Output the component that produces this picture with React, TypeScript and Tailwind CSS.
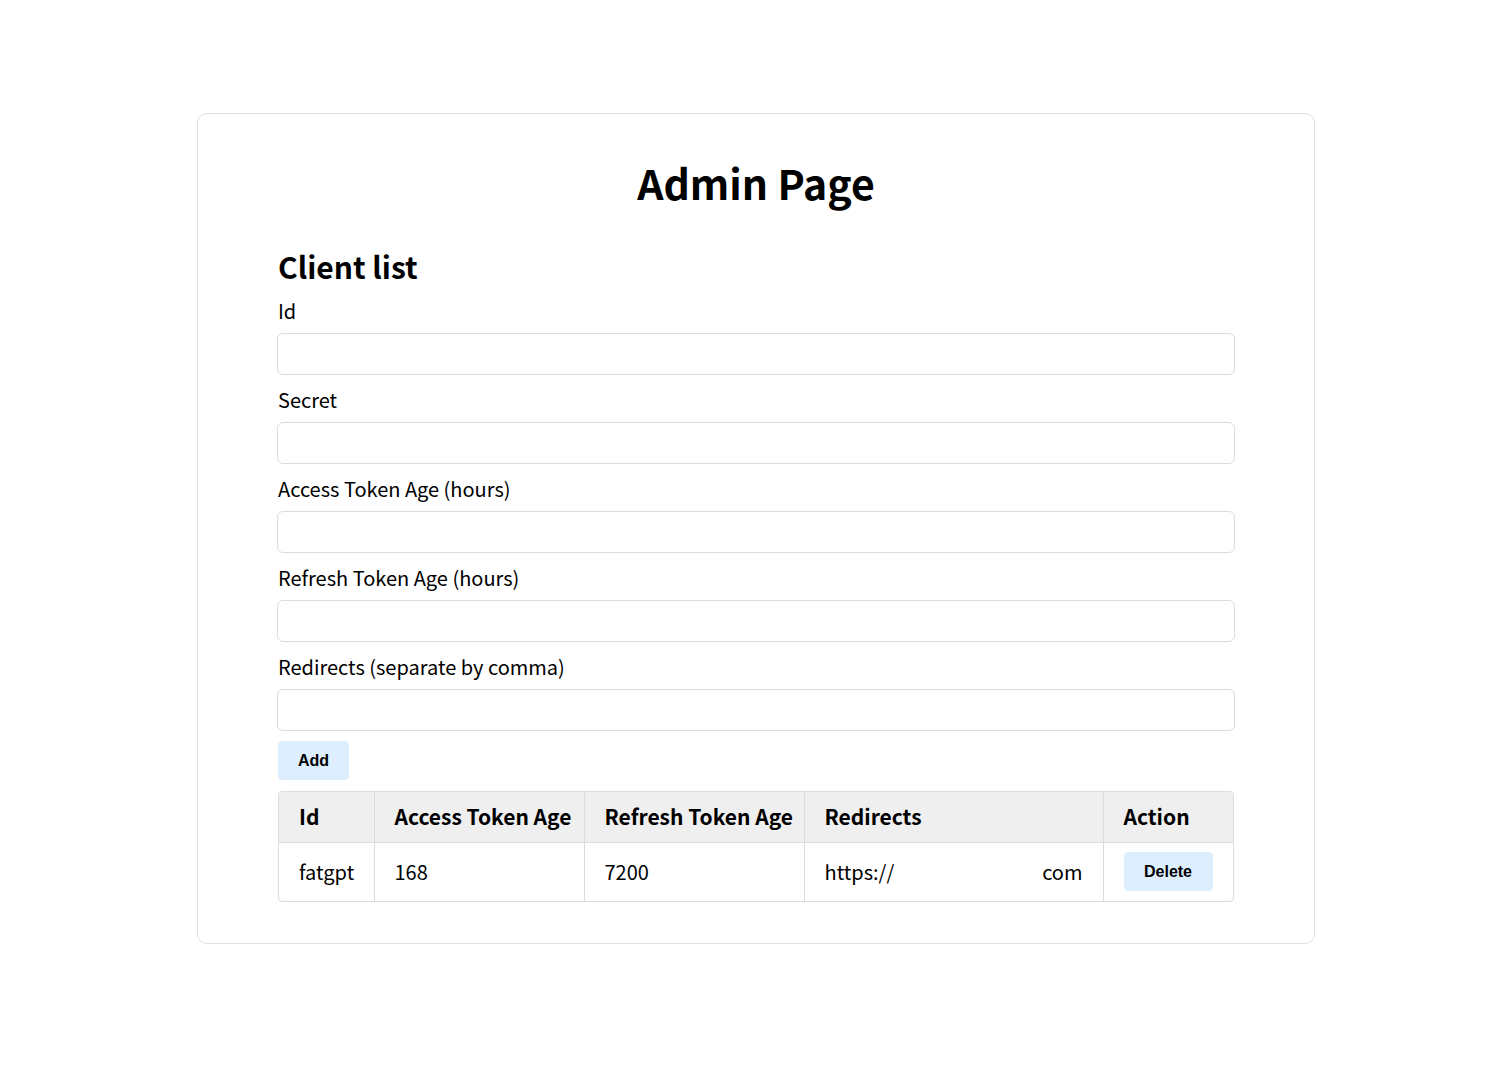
import React from "react";

const sans = { fontFamily: '"Noto Sans CJK SC", "Noto Sans", sans-serif' };
const btn = { fontFamily: '"Liberation Sans", Arial, sans-serif' };

function Field({ label }: { label: string }) {
  return (
    <div className="flex flex-col">
      <label className="mt-3 text-[20px] leading-[26px] text-black">{label}</label>
      <input className="-ml-px mt-[9px] h-[42px] w-[calc(100%+2px)] rounded-[6px] border border-[#dcdcdc] bg-white px-3 outline-none" />
    </div>
  );
}

export default function App() {
  return (
    <div className="min-h-[1076px] w-full bg-white pt-[113px]" style={sans}>
      <div className="ml-[197px] w-[1118px] rounded-[10px] border border-[#dedede] px-[80px] pb-[41px] pt-[42px]">
        <h1 className="-mt-[2px] pb-[2px] text-center text-[41px] font-bold leading-[56px] text-black">Admin Page</h1>
        <h2 className="mt-[34px] text-[30px] font-bold leading-[40px] text-black">Client list</h2>
        <Field label="Id" />
        <Field label="Secret" />
        <Field label="Access Token Age (hours)" />
        <Field label="Refresh Token Age (hours)" />
        <Field label="Redirects (separate by comma)" />
        <button
          className="mt-[10px] h-[39px] w-[71px] rounded-[4px] bg-[#ddeeff] text-[16px] font-bold text-black"
          style={btn}
        >
          Add
        </button>
        <div className="mt-[11px] overflow-hidden rounded-[4px] border border-[#dcdcdc]">
          <table className="w-full border-collapse text-left text-black">
            <thead>
              <tr className="h-[50px] bg-[#efefef] text-[21px]">
                <th className="w-[95px] border-r border-b border-[#dcdcdc] pl-[20px] font-bold">Id</th>
                <th className="w-[210px] border-r border-b border-[#dcdcdc] pl-[20px] font-bold">Access Token Age</th>
                <th className="w-[220px] border-r border-b border-[#dcdcdc] pl-[20px] font-bold">Refresh Token Age</th>
                <th className="w-[299px] border-r border-b border-[#dcdcdc] pl-[20px] font-bold">Redirects</th>
                <th className="border-b border-[#dcdcdc] pl-[20px] font-bold">Action</th>
              </tr>
            </thead>
            <tbody>
              <tr className="h-[59px] text-[20px]">
                <td className="border-r border-[#dcdcdc] pl-[20px]">fatgpt</td>
                <td className="border-r border-[#dcdcdc] pl-[20px]">168</td>
                <td className="border-r border-[#dcdcdc] pl-[20px]">7200</td>
                <td className="border-r border-[#dcdcdc] px-[20px]">
                  <div className="flex justify-between">
                    <span>https://</span>
                    <span>com</span>
                  </div>
                </td>
                <td className="pl-[20px]">
                  <button
                    className="h-[39px] w-[89px] rounded-[4px] bg-[#ddeeff] text-[16px] font-bold text-black"
                    style={btn}
                  >
                    Delete
                  </button>
                </td>
              </tr>
            </tbody>
          </table>
        </div>
      </div>
    </div>
  );
}
